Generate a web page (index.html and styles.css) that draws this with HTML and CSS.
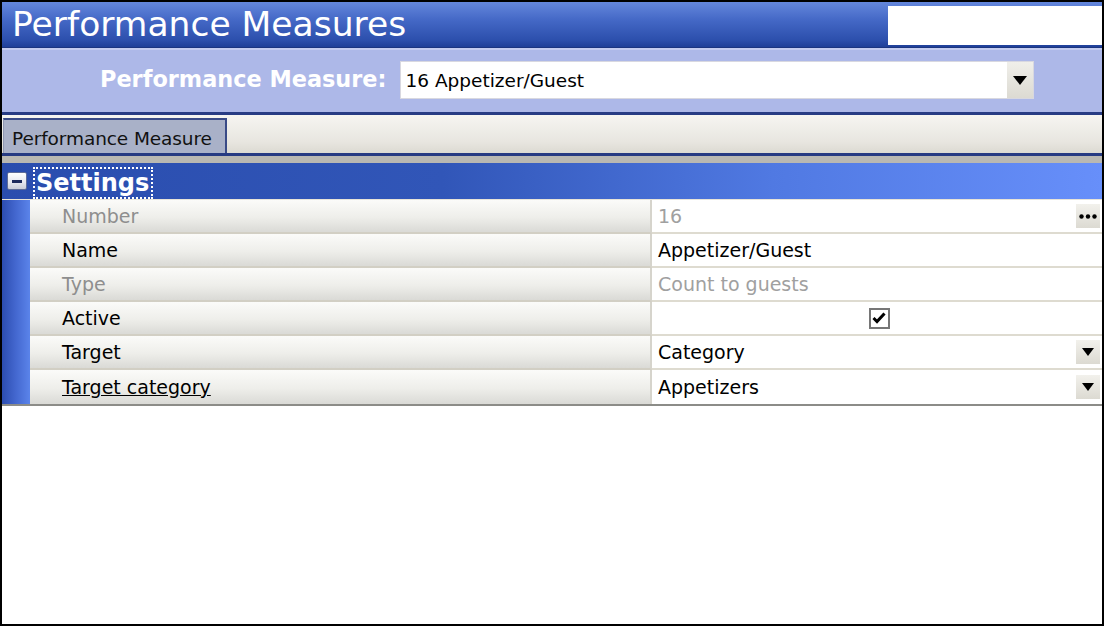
FILE: index.html
```html
<!DOCTYPE html>
<html>
<head>
<meta charset="utf-8">
<link rel="stylesheet" href="styles.css">
</head>
<body>
<div class="frame">
  <header class="titlebar">
    <h1 class="title">Performance Measures</h1>
    <div class="title-box"></div>
  </header>
  <div class="selector">
    <label class="selector-label">Performance Measure:</label>
    <div class="combo">
      <span class="combo-text">16 Appetizer/Guest</span>
      <span class="combo-btn"><svg width="14" height="9" viewBox="0 0 14 9"><path d="M0 0H14L7 9Z" fill="#000"/></svg></span>
    </div>
  </div>
  <div class="tabstrip">
    <div class="tab">Performance Measure</div>
  </div>
  <div class="tabline"></div>
  <div class="grid">
    <div class="group">
      <div class="strip"><span class="minus"><span class="minus-bar"></span></span></div>
      <div class="group-title"><span class="focus">Settings</span></div>
    </div>
    <div class="row">
      <div class="strip"></div>
      <div class="label disabled">Number</div>
      <div class="value disabled">16<span class="btn dots"><svg width="18" height="5" viewBox="0 0 18 5"><circle cx="2.5" cy="2.5" r="2.2"/><circle cx="9" cy="2.5" r="2.2"/><circle cx="15.5" cy="2.5" r="2.2"/></svg></span></div>
    </div>
    <div class="row">
      <div class="strip"></div>
      <div class="label">Name</div>
      <div class="value">Appetizer/Guest</div>
    </div>
    <div class="row">
      <div class="strip"></div>
      <div class="label disabled">Type</div>
      <div class="value disabled">Count to guests</div>
    </div>
    <div class="row">
      <div class="strip"></div>
      <div class="label">Active</div>
      <div class="value center"><span class="check"><svg width="14" height="12" viewBox="0 0 14 12"><path d="M1.5 6L5 9.5L12.5 1.5" fill="none" stroke="#000" stroke-width="3"/></svg></span></div>
    </div>
    <div class="row">
      <div class="strip"></div>
      <div class="label">Target</div>
      <div class="value">Category<span class="btn"><svg width="12" height="8" viewBox="0 0 12 8"><path d="M0 0H12L6 8Z" fill="#000"/></svg></span></div>
    </div>
    <div class="row last">
      <div class="strip"></div>
      <div class="label"><u>Target category</u></div>
      <div class="value">Appetizers<span class="btn"><svg width="12" height="8" viewBox="0 0 12 8"><path d="M0 0H12L6 8Z" fill="#000"/></svg></span></div>
    </div>
  </div>
</div>
</body>
</html>
```
FILE: styles.css
```css
* { box-sizing: border-box; }
html, body { margin: 0; padding: 0; background: #fff; }
.frame {
  width: 1104px;
  height: 626px;
  border: 2px solid #000;
  background: #fff;
  display: flex;
  flex-direction: column;
  overflow: hidden;
  font-family: "DejaVu Sans", sans-serif;
}
.titlebar {
  height: 46px;
  flex: none;
  display: flex;
  align-items: flex-start;
  background: linear-gradient(#6487dc 0%, #4468c6 40%, #2c4fac 85%, #1f3f98 100%);
  border-bottom: 1px solid #1b3580;
}
.title {
  margin: 0;
  padding: 3px 0 0 10px;
  flex: 1;
  font-family: "DejaVu Sans", sans-serif;
  font-weight: normal;
  font-size: 34.5px;
  line-height: 38px;
  color: #fff;
  white-space: nowrap;
}
.title-box {
  width: 214px;
  height: 39px;
  margin-top: 4px;
  background: #fff;
}
.selector {
  height: 67px;
  flex: none;
  background: #adb8e8;
  border-top: 2px solid #c4ccf0;
  border-bottom: 3px solid #283c84;
  display: flex;
  align-items: center;
  padding: 0 68px 0 98px;
  gap: 14px;
}
.selector-label {
  font-family: "DejaVu Sans", sans-serif;
  font-weight: bold;
  font-size: 22.4px;
  color: #fff;
  white-space: nowrap;
  margin-top: -4px;
}
.combo {
  flex: 1;
  height: 38px;
  background: #fff;
  border: 1px solid #d8d8e0;
  display: flex;
  align-items: center;
  margin-top: -2px;
}
.combo-text {
  flex: 1;
  font-size: 18.5px;
  color: #000;
  padding-left: 4px;
}
.combo-btn {
  width: 26px;
  height: 100%;
  background: linear-gradient(#f0efea, #dcdad2);
  display: flex;
  align-items: center;
  justify-content: center;
}
.tabstrip {
  height: 38px;
  flex: none;
  background: linear-gradient(#f6f5f1, #e8e6e0 70%, #dcdad2);
  display: flex;
  align-items: flex-end;
  padding-left: 1px;
}
.tab {
  width: 224px;
  height: 35px;
  background: #a9b1c8;
  border-top: 2px solid #394a86;
  border-right: 2px solid #394a86;
  border-left: 1px solid #8e97b2;
  font-size: 18.5px;
  color: #111;
  padding: 8px 0 0 8px;
  white-space: nowrap;
  letter-spacing: -0.1px;
}
.tabline {
  height: 10px;
  flex: none;
  border-top: 3px solid #263a82;
  background: #b9b8b2;
}
.grid {
  display: flex;
  flex-direction: column;
  border-bottom: 2px solid #8c8c88;
}
.group {
  height: 37px;
  display: flex;
  background: linear-gradient(90deg, #2a4dae 0%, #3156b8 40%, #5079e2 70%, #678ffa 100%);
  border-bottom: 1px solid #e8e4d8;
}
.strip {
  width: 28px;
  flex: none;
  background: linear-gradient(90deg, #2c4db0, #4468d0 50%, #5b84ea);
  display: flex;
  align-items: center;
  justify-content: center;
}
.group .strip { background: none; padding-left: 2px; }
.minus {
  width: 20px;
  height: 18px;
  background: linear-gradient(#ffffff, #e4e6ee 60%, #c8ccd8);
  border: 1px solid #5e6c98;
  border-radius: 2px;
  display: flex;
  align-items: center;
  justify-content: center;
}
.minus-bar { width: 10px; height: 3px; background: #1c2a5c; }
.group-title {
  display: flex;
  align-items: flex-end;
  padding-left: 3px;
}
.focus {
  font-size: 24px;
  font-weight: bold;
  color: #fff;
  border: 2px dotted #fff;
  padding: 0 2px 0 1px;
  line-height: 28px;
}
.row {
  height: 34px;
  display: flex;
}
.label {
  width: 622px;
  flex: none;
  background: linear-gradient(#fbfbf9, #eeeeea 55%, #dadad6);
  border-bottom: 2px solid #d2cfc4;
  border-right: 2px solid #d6d4cc;
  padding-left: 32px;
  display: flex;
  align-items: center;
  font-size: 19px;
  color: #000;
}
.value {
  flex: 1;
  background: #fff;
  border-bottom: 2px solid #dedbd0;
  padding-left: 6px;
  display: flex;
  align-items: center;
  font-size: 19px;
  color: #000;
}
.row.last .label, .row.last .value { border-bottom: none; }
.disabled { color: #8e8e8e; }
.value.disabled { color: #a0a0a0; }
.center { justify-content: center; padding-left: 0; padding-right: 0; }
.check {
  width: 21px;
  height: 21px;
  border: 2px solid #767676;
  background: #fff;
  display: flex;
  align-items: center;
  justify-content: center;
  margin-left: 4px;
}
.btn {
  margin-left: auto;
  margin-right: 2px;
  width: 24px;
  height: 24px;
  background: linear-gradient(#f2f1ec, #dcdad2);
  display: flex;
  align-items: center;
  justify-content: center;
}
.dots svg circle { fill: #000; }
```
